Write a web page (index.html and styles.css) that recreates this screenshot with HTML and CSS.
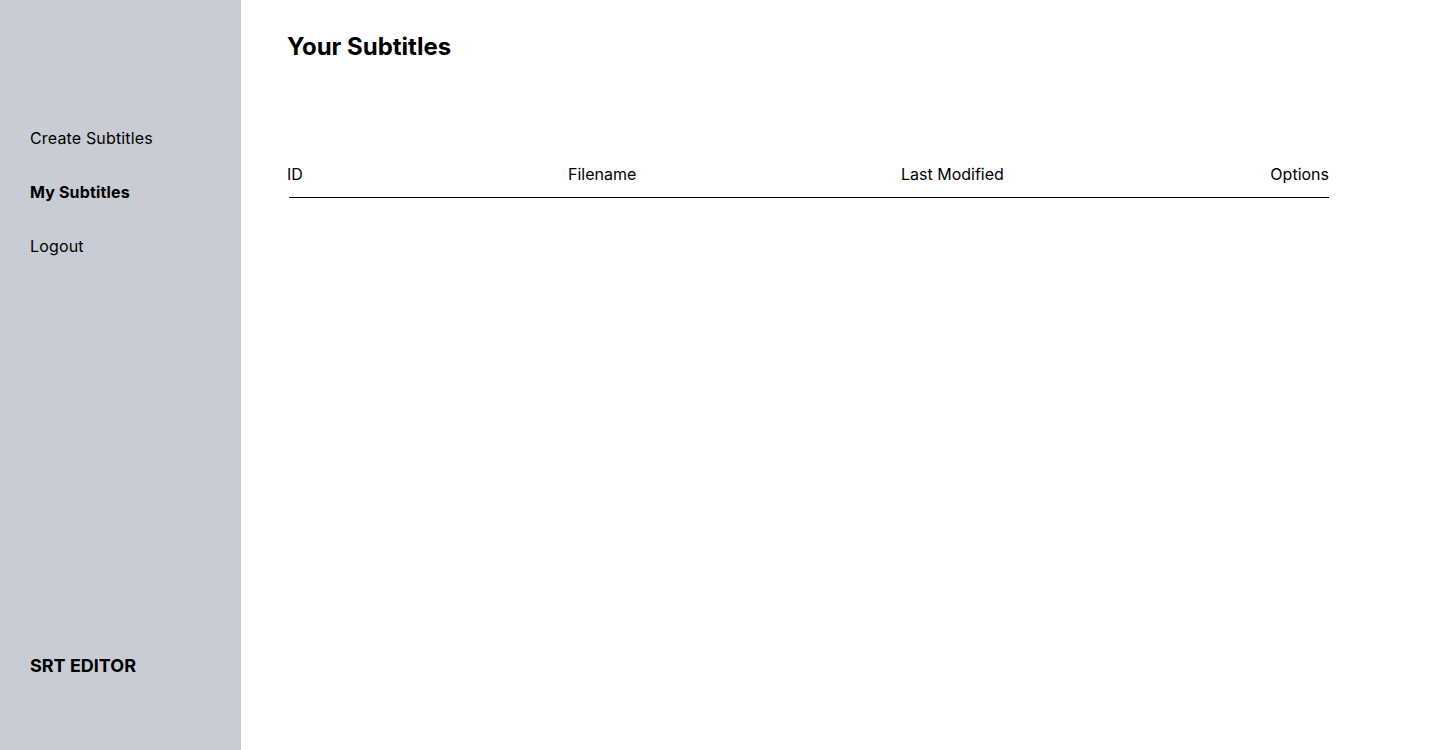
FILE: index.html
```html
<!DOCTYPE html>
<html lang="en">
<head>
<meta charset="utf-8">
<title>SRT Editor</title>
<link rel="stylesheet" href="styles.css">
</head>
<body>
<div class="app">
  <aside class="sidebar">
    <nav class="nav">
      <a class="nav-item" href="#">Create Subtitles</a>
      <a class="nav-item active" href="#">My Subtitles</a>
      <a class="nav-item" href="#">Logout</a>
    </nav>
    <div class="brand">SRT EDITOR</div>
  </aside>
  <main class="main">
    <h1 class="title">Your Subtitles</h1>
    <div class="table">
      <div class="table-head">
        <div class="col">ID</div>
        <div class="col">Filename</div>
        <div class="col">Last Modified</div>
        <div class="col col-right">Options</div>
      </div>
      <div class="table-rule"></div>
    </div>
  </main>
</div>
</body>
</html>
```
FILE: styles.css
```css
* { box-sizing: border-box; }
html, body { margin: 0; padding: 0; }
body {
  font-family: Inter, "Noto Sans", sans-serif;
  color: #000;
  background: #fff;
}
.app {
  display: flex;
  height: 750px;
}
.sidebar {
  width: 241px;
  flex: 0 0 241px;
  background: #c8ccd4;
  display: flex;
  flex-direction: column;
  padding: 126px 0 72px 30px;
}
.nav {
  display: flex;
  flex-direction: column;
  gap: 30px;
}
.nav-item {
  font-size: 16px;
  line-height: 24px;
  letter-spacing: 0.01em;
  color: #000;
  text-decoration: none;
}
.nav-item.active { font-weight: 700; }
.brand {
  margin-top: auto;
  font-size: 18px;
  line-height: 24px;
  font-weight: 700;
}
.main {
  flex: 1;
  padding: 31px 0 0 46px;
}
.title {
  margin: 0;
  font-size: 24px;
  line-height: 32px;
  font-weight: 700;
}
.table {
  margin-top: 99px;
  width: 1042px;
}
.table-head {
  display: grid;
  grid-template-columns: 281px 333px 1fr auto;
  font-size: 16px;
  line-height: 24px;
  padding-bottom: 11px;
}
.col-right { text-align: right; }
.table-rule {
  margin-left: 2px;
  height: 1px;
  background: #000;
}
```
